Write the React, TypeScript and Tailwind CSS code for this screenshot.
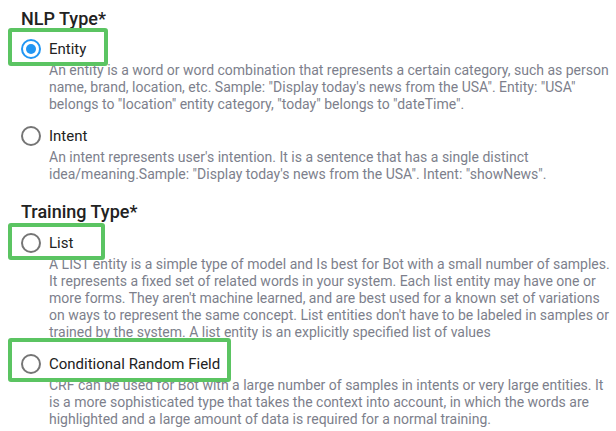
import React from "react";

type Option = {
  label: string;
  checked?: boolean;
  desc: string;
  highlight?: string; // classes for the green annotation box
  gap: string;
};

type Group = { title: string; titleGap: string; options: Option[] };

const groups: Group[] = [
  {
    title: "NLP Type*",
    titleGap: "mt-[8px]",
    options: [
      {
        label: "Entity",
        checked: true,
        gap: "mt-[6px]",
        highlight: "-top-[8px] -left-[13px] w-[100px] h-[38px]",
        desc: 'An entity is a word or word combination that represents a certain category, such as person name, brand, location, etc. Sample: "Display today\'s news from the USA". Entity: "USA" belongs to "location" entity category, "today" belongs to "dateTime".',
      },
      {
        label: "Intent",
        gap: "mt-[10px]",
        desc: 'An intent represents user\'s intention. It is a sentence that has a single distinct idea/meaning.Sample: "Display today\'s news from the USA". Intent: "showNews".',
      },
    ],
  },
  {
    title: "Training Type*",
    titleGap: "mt-[18px]",
    options: [
      {
        label: "List",
        gap: "mt-[7px]",
        highlight: "-top-[7px] -left-[13px] w-[97px] h-[37px]",
        desc: "A LIST entity is a simple type of model and Is best for Bot with a small number of samples. It represents a fixed set of related words in your system. Each list entity may have one or more forms. They aren't machine learned, and are best used for a known set of variations on ways to represent the same concept. List entities don't have to be labeled in samples or trained by the system. A list entity is an explicitly specified list of values",
      },
      {
        label: "Conditional Random Field",
        gap: "mt-[10px]",
        highlight: "-top-[13px] -left-[13px] w-[223px] h-[44px]",
        desc: "CRF can be used for Bot with a large number of samples in intents or very large entities. It is a more sophisticated type that takes the context into account, in which the words are highlighted and a large amount of data is required for a normal training.",
      },
    ],
  },
];

function Radio({ checked }: { checked?: boolean }) {
  return checked ? (
    <span className="flex h-[20px] w-[20px] items-center justify-center rounded-full border-2 border-[#2196f3]">
      <span className="h-[10px] w-[10px] rounded-full bg-[#2196f3]" />
    </span>
  ) : (
    <span className="h-[20px] w-[20px] rounded-full border-2 border-[#757575]" />
  );
}

export default function App() {
  return (
    <div className="min-h-[431px] w-[616px] bg-white pl-[21px] font-['Roboto',sans-serif]">
      {groups.map((g) => (
        <div key={g.title}>
          <h2
            className={`${g.titleGap} h-[22px] text-[18px] leading-[22px] font-medium text-[#222222]`}
          >
            {g.title}
          </h2>
          {g.options.map((o) => (
            <div key={o.label} className={o.gap}>
              <div className="relative flex h-[26px] items-center gap-[8px]">
                <Radio checked={o.checked} />
                <span className="text-[15px] leading-[26px] text-[#222222]">
                  {o.label}
                </span>
                {o.highlight && (
                  <span
                    className={`absolute ${o.highlight} rounded-[3px] border-[4px] border-[#5bc462]`}
                  />
                )}
              </div>
              <p className="ml-[28px] w-[562px] text-[14px] leading-[17px] text-[#7d7f8c]">
                {o.desc}
              </p>
            </div>
          ))}
        </div>
      ))}
    </div>
  );
}
